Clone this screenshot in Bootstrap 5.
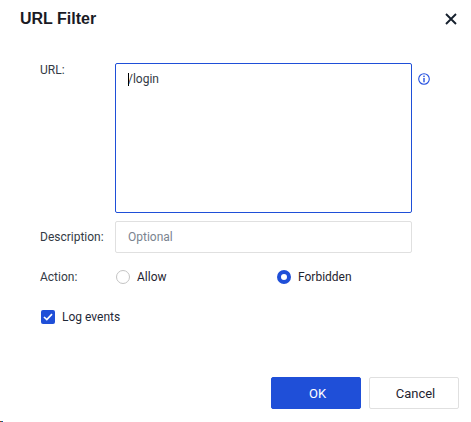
<!DOCTYPE html>
<html lang="en">
<head>
<meta charset="utf-8">
<title>URL Filter</title>
<link href="https://cdn.jsdelivr.net/npm/bootstrap@5.3.0/dist/css/bootstrap.min.css" rel="stylesheet">
<style>
html,body{height:422px;overflow:hidden;background:#fff}
body{font-family:Roboto,"Liberation Sans",sans-serif;font-size:12px;color:#1f2937}
.dlg{position:relative;width:471px;height:422px;display:flex;flex-direction:column;padding:0 12px 13px 20px}
.dlg-head{height:63px;padding-top:9px}
.dlg-title{font-family:"Liberation Sans",sans-serif;font-weight:700;font-size:16px;line-height:20px;color:#1a1a24;margin:0}
.close-x{width:16px;height:20px;padding:0;border:0;background:none;line-height:0}
.dlg-body{padding-left:20px;flex:1}
.lab{width:75px;flex:none;color:#333a45;line-height:14px}
.fld{width:297px;flex:none}
.url-wrap{width:297px;height:150px;flex:none}
.url-box.form-control{height:150px;width:297px;font-size:12px;line-height:16px;padding:7px 12px;border:1px solid #1f4fd8;border-radius:2px;box-shadow:none;resize:none;color:#333a45;font-family:Roboto,sans-serif}
.text-caret{position:absolute;left:13px;top:10px;width:1px;height:13px;background:#000}
.desc-box.form-control{height:32px;font-size:12px;padding:0 12px;border:1px solid #e0e0e0;border-radius:2px;font-family:Roboto,sans-serif}
.desc-box::placeholder{color:#7b8490;opacity:1}
.r-url{height:150px}
.r-desc{margin-top:8px;height:32px}
.r-act{margin-top:16px;height:16px}
.r-log{margin-top:24px;height:16px}
.info{width:12px;height:12px;margin:10px 0 0 6px;flex:none}
.opt{display:flex;align-items:center;gap:7px;width:161px;color:#1f2430}
.dot{width:14px;height:14px;border-radius:50%;border:1px solid #c4c4c4;background:#fff;flex:none;margin-left:1px}
.dot-on{border:4px solid #1f4fd8}
.tick{width:14px;height:14px;background:#1f4fd8;border-radius:2px;flex:none;display:flex;align-items:center;justify-content:center;margin:0 7px 0 1px}
.foot{gap:8px}
.btn.act-btn{width:90px;height:32px;font-size:13px;padding:2px 0 0 3px;border-radius:2px}
.btn-ok{background:#1f4fd8;border:1px solid #1f4fd8;color:#fff}
.btn-no{background:#fff;border:1px solid #e0e0e0;color:#1f2430}
.speck{position:absolute;left:0;bottom:0;width:3px;height:1px;background:linear-gradient(90deg,#b02020 0 1px,#208040 1px 2px,#2040c0 2px 3px)}
</style>
</head>
<body>
<div class="dlg">
  <div class="dlg-head d-flex justify-content-between align-items-start">
    <h5 class="dlg-title">URL Filter</h5>
    <button class="close-x" type="button" aria-label="Close">
      <svg width="12" height="12" viewBox="0 0 12 12"><path d="M1 1 L11 11 M11 1 L1 11" stroke="#16202e" stroke-width="1.9" fill="none"/></svg>
    </button>
  </div>
  <div class="dlg-body">
    <div class="d-flex r-url">
      <div class="lab">URL:</div>
      <div class="url-wrap position-relative">
        <textarea class="form-control url-box">/login</textarea>
        <span class="text-caret"></span>
      </div>
      <svg class="info" viewBox="0 0 12 12"><circle cx="6" cy="6" r="5.3" fill="none" stroke="#2450e0" stroke-width="1.1"/><rect x="5.3" y="2.6" width="1.4" height="1.4" fill="#2450e0"/><rect x="5.3" y="4.9" width="1.4" height="4.4" fill="#2450e0"/></svg>
    </div>
    <div class="d-flex align-items-center r-desc">
      <div class="lab">Description:</div>
      <div class="fld"><input class="form-control desc-box" type="text" placeholder="Optional"></div>
    </div>
    <div class="d-flex align-items-center r-act">
      <div class="lab">Action:</div>
      <div class="opt"><span class="dot"></span>Allow</div>
      <div class="opt"><span class="dot dot-on"></span>Forbidden</div>
    </div>
    <div class="d-flex align-items-center r-log">
      <span class="tick"><svg width="10" height="8" viewBox="0 0 10 8"><path d="M1 4 L3.8 6.6 L9 1.2" stroke="#fff" stroke-width="1.7" fill="none"/></svg></span>
      <span class="text-nowrap">Log events</span>
    </div>
  </div>
  <div class="foot d-flex justify-content-end">
    <button class="btn act-btn btn-ok" type="button">OK</button>
    <button class="btn act-btn btn-no" type="button">Cancel</button>
  </div>
  <span class="speck"></span>
</div>
</body>
</html>
